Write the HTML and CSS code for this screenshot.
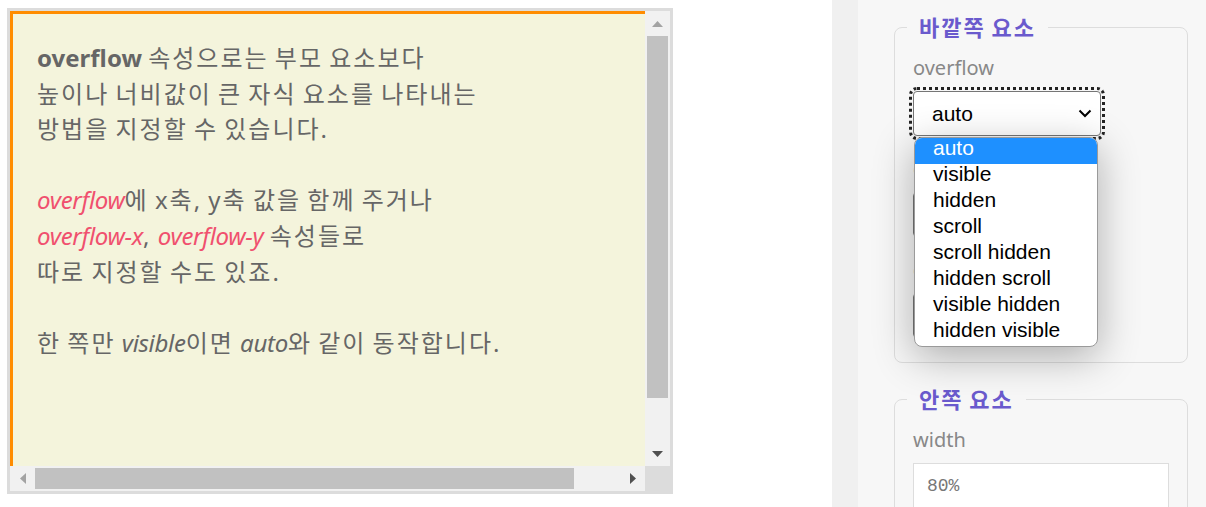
FILE: index.html
```html
<!DOCTYPE html>
<html lang="ko">
<head>
<meta charset="utf-8">
<title>overflow</title>
<link rel="stylesheet" href="styles.css">
</head>
<body>
<div class="page">
  <div class="scrollbox">
    <div class="viewport">
      <div class="child">
        <p><b>overflow</b> 속성으로는 부모 요소보다<br>높이나 너비값이 큰 자식 요소를 나타내는<br>방법을 지정할 수 있습니다.</p>
        <p><em class="hl">overflow</em>에 x축, y축 값을 함께 주거나<br><em class="hl">overflow-x</em>, <em class="hl">overflow-y</em> 속성들로<br>따로 지정할 수도 있죠.</p>
        <p>한 쪽만 <em>visible</em>이면 <em>auto</em>와 같이 동작합니다.</p>
      </div>
    </div>
    <div class="vbar">
      <div class="sbtn"><svg width="11" height="6" viewBox="0 0 11 6"><path d="M0 6L5.5 0L11 6Z" fill="#a3a3a3"/></svg></div>
      <div class="vtrack"><div class="vthumb"></div></div>
      <div class="sbtn"><svg width="11" height="6" viewBox="0 0 11 6"><path d="M0 0L5.5 6L11 0Z" fill="#505050"/></svg></div>
    </div>
    <div class="hbar">
      <div class="sbtn"><svg width="6" height="11" viewBox="0 0 6 11"><path d="M6 0L0 5.5L6 11Z" fill="#a3a3a3"/></svg></div>
      <div class="htrack"><div class="hthumb"></div></div>
      <div class="sbtn"><svg width="6" height="11" viewBox="0 0 6 11"><path d="M0 0L6 5.5L0 11Z" fill="#505050"/></svg></div>
    </div>
    <div class="corner"></div>
  </div>

  <aside class="sidebar">
    <div class="panel">
      <fieldset class="group">
        <legend>바깥쪽 요소</legend>
        <div class="field">
          <label>overflow</label>
          <div class="select focus">
            <span>auto</span>
            <svg class="chev" width="14" height="9" viewBox="0 0 14 9"><path d="M1.5 1.5L7 7L12.5 1.5" fill="none" stroke="#000" stroke-width="2"/></svg>
            <div class="dropdown">
              <div class="opt sel">auto</div>
              <div class="opt">visible</div>
              <div class="opt">hidden</div>
              <div class="opt">scroll</div>
              <div class="opt">scroll hidden</div>
              <div class="opt">hidden scroll</div>
              <div class="opt">visible hidden</div>
              <div class="opt">hidden visible</div>
            </div>
          </div>
        </div>
        <div class="field">
          <label>overflow-x</label>
          <div class="select narrow"><span>auto</span></div>
        </div>
        <div class="field">
          <label>overflow-y</label>
          <div class="select narrow"><span>auto</span></div>
        </div>
      </fieldset>
      <fieldset class="group">
        <legend>안쪽 요소</legend>
        <div class="field">
          <label>width</label>
          <div class="input">80%</div>
        </div>
      </fieldset>
    </div>
  </aside>
</div>
</body>
</html>
```
FILE: styles.css
```css
* { box-sizing: border-box; }
html, body { margin: 0; padding: 0; }
body {
  background: #fff;
  font-family: "Noto Sans", "Noto Sans CJK KR", sans-serif;
  overflow: hidden;
}
.page {
  display: flex;
  height: 507px;
  width: 1206px;
}

/* left scroll box */
.scrollbox {
  flex: none;
  margin: 8px 0 0 7px;
  width: 666px;
  height: 486px;
  border: 3px solid #dcdcdc;
  display: grid;
  grid-template-columns: 635px 25px;
  grid-template-rows: 455px 25px;
}
.viewport {
  overflow: hidden;
  background: #f4f4dc;
}
.child {
  width: 800px;
  height: 700px;
  border-top: 3px solid #ff8c00;
  border-left: 3px solid #ff8c00;
  background: #f4f4dc;
  padding: 26px 0 0 24px;
  color: #666;
  font-size: 24px;
  line-height: 35.6px;
  white-space: nowrap;
}
.child p {
  margin: 0 0 35.6px;
  letter-spacing: 2px;
  word-spacing: -2px;
}
.child b, .child em { letter-spacing: 0; }
.child em { font-style: italic; letter-spacing: -0.3px; }
.child .hl { color: #f0506e; }

.vbar {
  background: #f1f1f1;
  display: flex;
  flex-direction: column;
}
.hbar {
  background: #f1f1f1;
  display: flex;
}
.sbtn {
  flex: none;
  width: 25px;
  height: 25px;
  display: flex;
  align-items: center;
  justify-content: center;
}
.sbtn svg { display: block; }
.vtrack { flex: 1; padding: 0 2px; }
.vthumb { height: 362px; background: #c1c1c1; }
.htrack { flex: 1; padding: 2px 0; }
.hthumb { width: 539px; height: 100%; background: #c1c1c1; }
.corner { background: #dcdcdc; }

/* right side panel */
.sidebar {
  flex: none;
  margin-left: auto;
  width: 374px;
  height: 507px;
  background: #f0f0f0;
  padding-left: 26px;
}
.panel {
  height: 100%;
  background: #f7f7f7;
  padding: 13px 18px 0 36px;
}
.group {
  margin: 0 0 22px;
  padding: 0 18px 24px;
  border: 1px solid #dddddd;
  border-radius: 8px;
  min-width: 0;
}
.group legend {
  margin-left: -6px;
  padding: 0 12px;
  font-size: 22px;
  line-height: 28px;
  font-weight: 700;
  color: #6a5acd;
  letter-spacing: 2px;
  word-spacing: -2px;
}
.field { margin-top: 19px; }
.group legend + .field { margin-top: 13px; }
.field label {
  display: block;
  font-size: 20px;
  line-height: 28px;
  color: #888;
  margin-bottom: 9px;
}
.select {
  position: relative;
  width: 188px;
  height: 45px;
  border: 1px solid #767676;
  border-radius: 4px;
  background: #fff;
  display: flex;
  align-items: center;
  justify-content: space-between;
  padding: 0 8px 0 18px;
  font-family: "Liberation Sans", Arial, sans-serif;
  font-size: 21px;
  color: #000;
}
.select.narrow { width: 180px; }
.select.focus {
  outline: 3px dotted #222;
  outline-offset: 1px;
  z-index: 2;
}
.chev { display: block; }
.dropdown {
  position: absolute;
  top: calc(100% + 2px);
  left: 0;
  width: 184px;
  border: 1px solid #9a9a9a;
  border-radius: 8px;
  background: #fff;
  box-shadow: 0 10px 40px rgba(0, 0, 0, 0.3);
  overflow: hidden;
  z-index: 5;
}
.opt {
  height: 26px;
  line-height: 20px;
  padding-left: 18px;
  white-space: nowrap;
}
.opt.sel { background: #1e90ff; color: #fff; }
.input {
  width: 256px;
  height: 45px;
  border: 1px solid #dddddd;
  background: #fff;
  padding: 0 13px;
  font-family: "Liberation Mono", monospace;
  font-size: 18px;
  color: #777;
  display: flex;
  align-items: center;
}
```
